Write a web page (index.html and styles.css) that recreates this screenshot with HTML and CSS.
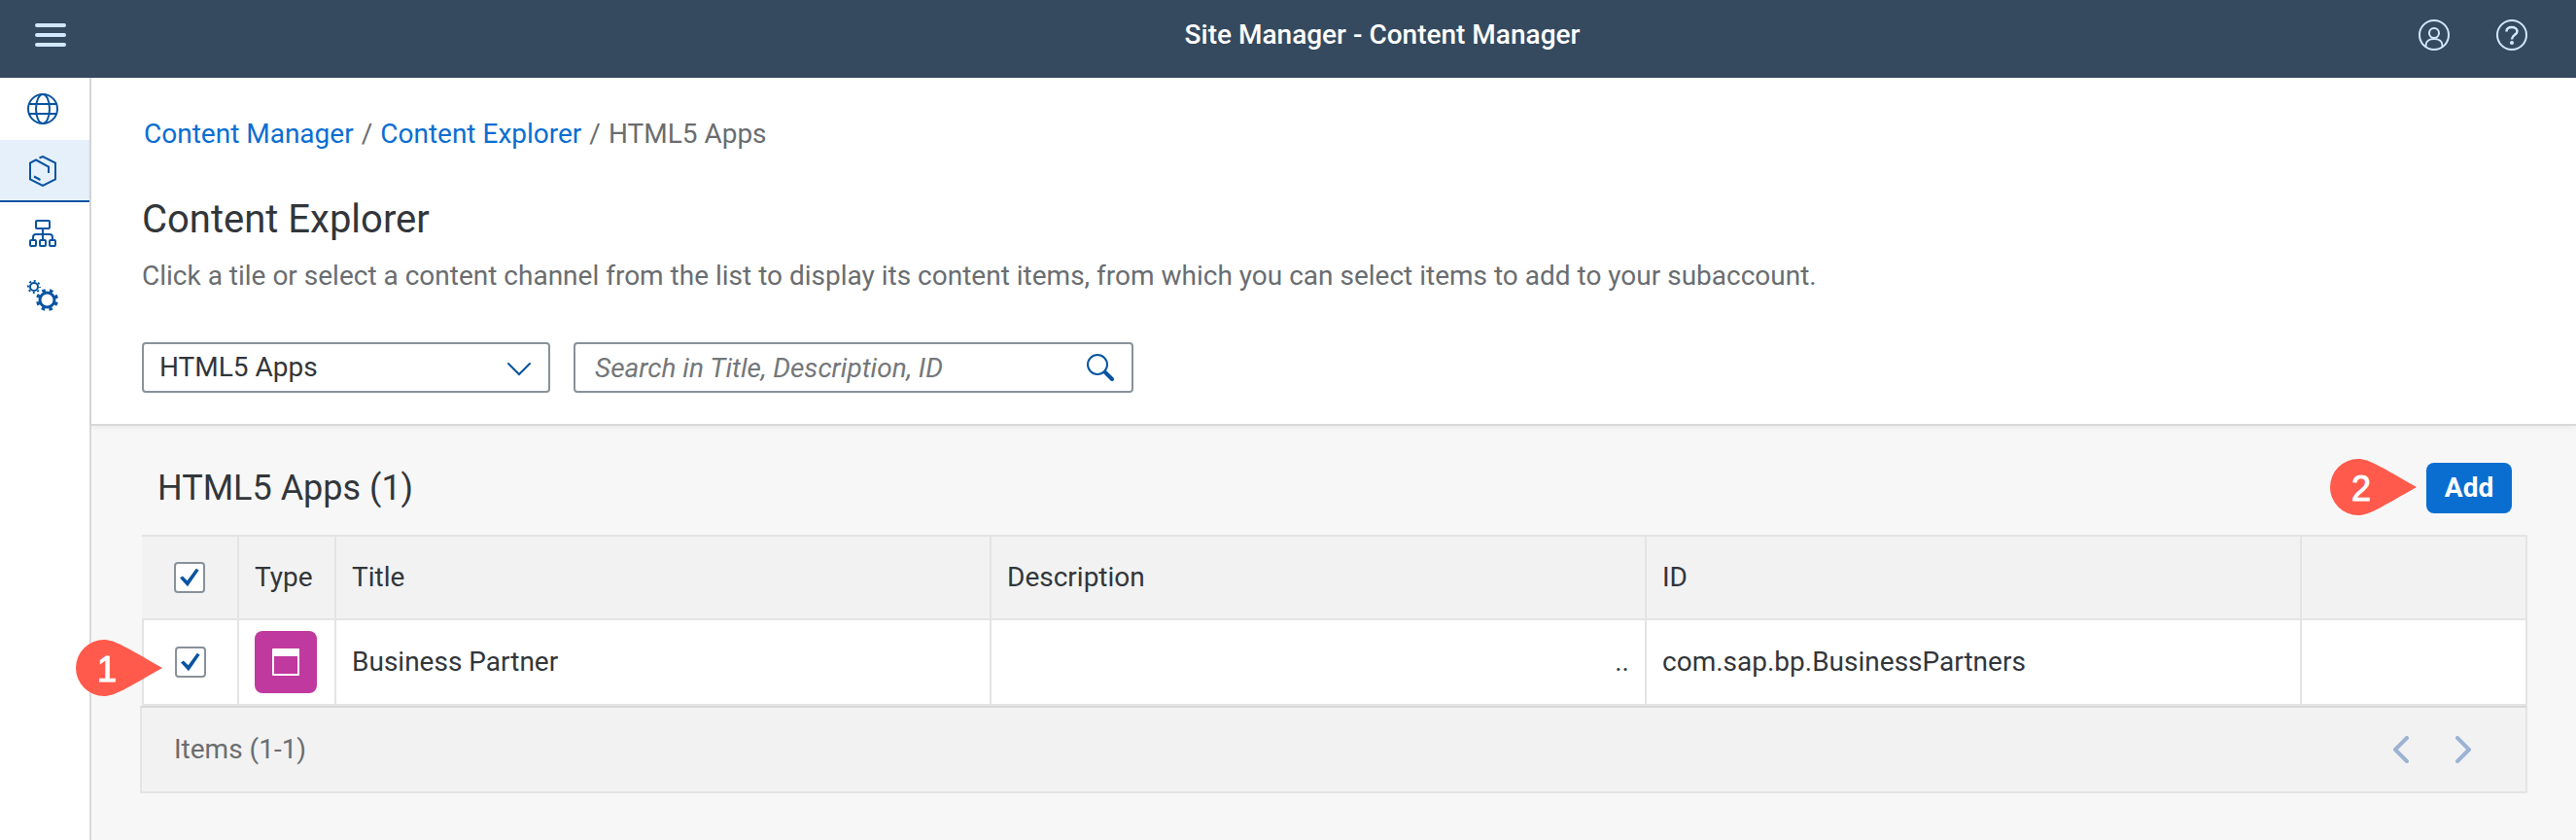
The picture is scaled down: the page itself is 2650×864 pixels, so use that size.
FILE: index.html
```html
<!DOCTYPE html>
<html lang="en">
<head>
<meta charset="utf-8">
<title>Site Manager - Content Manager</title>
<link rel="stylesheet" href="styles.css">
</head>
<body>
<header class="shell">
  <div class="shell-start">
    <button class="icon-button" type="button" aria-label="Menu">
      <svg width="32" height="32" viewBox="0 0 32 32" fill="none" stroke="currentColor" stroke-width="4" stroke-linecap="round"><path d="M2 6H30M2 16H30M2 26H30"/></svg>
    </button>
  </div>
  <div class="shell-title">Site Manager - Content Manager</div>
  <div class="shell-end">
    <button class="icon-button" type="button" aria-label="Account">
      <svg width="32" height="32" viewBox="0 0 32 32" fill="none" stroke="currentColor" stroke-width="2"><circle cx="16" cy="16" r="15"/><circle cx="16" cy="14" r="5"/><path d="M7.500 28V26.500C7.500 22.500 11 20 16 20S24.500 22.500 24.500 26.500V28"/></svg>
    </button>
    <button class="icon-button" type="button" aria-label="Help">
      <svg width="32" height="32" viewBox="0 0 32 32" fill="none" stroke="currentColor" stroke-width="2"><circle cx="16" cy="16" r="15"/><path stroke-width="2.500" d="M10.500 12.500C10.500 9.500 13 8 16 8S21.500 9.800 21.500 12.300C21.500 15.800 16 16 16 20.500"/><circle cx="16" cy="24" r="2" fill="currentColor" stroke="none"/></svg>
    </button>
  </div>
</header>
<div class="body">
  <nav class="sidebar" aria-label="Main">
    <a class="nav-item" href="#site" aria-label="Site Directory">
      <svg width="32" height="32" viewBox="0 0 32 32" fill="none" stroke="currentColor" stroke-width="2"><circle cx="16" cy="16" r="15"/><ellipse cx="16" cy="16" rx="7" ry="15"/><path d="M2 11H30M2 21H30"/></svg>
    </a>
    <a class="nav-item nav-item-selected" href="#content" aria-label="Content Manager" aria-current="page">
      <svg width="32" height="32" viewBox="0 0 32 32" fill="none" stroke="currentColor" stroke-width="2"><path d="M12.500 2.500L16 1L29 7.500V24.500L16 31L3 24.500V7.500L9 4.500L22 11.500V18M7 21.500L13.500 25"/></svg>
    </a>
    <a class="nav-item" href="#channels" aria-label="Channel Manager">
      <svg width="32" height="32" viewBox="0 0 32 32" fill="none" stroke="currentColor" stroke-width="2"><rect x="9" y="3" width="14" height="8" rx="1"/><rect x="3" y="23" width="6" height="6" rx="1"/><rect x="13" y="23" width="6" height="6" rx="1"/><rect x="23" y="23" width="6" height="6" rx="1"/><path d="M16 11V23M6 23V20Q6 17 9 17H23Q26 17 26 20V23"/></svg>
    </a>
    <a class="nav-item" href="#settings" aria-label="Settings">
      <svg width="32" height="32" viewBox="0 0 32 32" fill="none" stroke="currentColor"><circle cx="7" cy="7" r="4" stroke-width="2"/><circle cx="7" cy="7" r="6" stroke-width="2" stroke-dasharray="2 2.712" stroke-dashoffset="1"/><circle cx="20.500" cy="20.500" r="7.500" stroke-width="3"/><circle cx="20.500" cy="20.500" r="10" stroke-width="3" stroke-dasharray="3.600 4.254" stroke-dashoffset="-2.200"/></svg>
    </a>
  </nav>
  <main class="main">
    <section class="page-header">
      <nav class="breadcrumb" aria-label="Breadcrumb">
        <a href="#content">Content Manager</a><span>/</span><a href="#explorer">Content Explorer</a><span>/</span><span>HTML5 Apps</span>
      </nav>
      <h1 class="page-title">Content Explorer</h1>
      <p class="page-text">Click a tile or select a content channel from the list to display its content items, from which you can select items to add to your subaccount.</p>
      <div class="filters">
        <div class="field select-field">
          <select class="control" aria-label="Content channel"><option>HTML5 Apps</option></select>
          <svg class="field-icon select-icon" width="24" height="16" viewBox="0 0 24 16" fill="none" stroke="currentColor" stroke-width="2" stroke-linecap="round"><path d="M1 2L12 13L23 2"/></svg>
        </div>
        <div class="field search-field">
          <input class="control search-control" type="text" aria-label="Search" placeholder="Search in Title, Description, ID">
          <button class="field-icon search-icon" type="button" aria-label="Search">
            <svg width="28" height="28" viewBox="0 0 28 28" fill="none" stroke="currentColor" stroke-linecap="round"><circle cx="11" cy="11" r="10" stroke-width="2"/><path stroke-width="4" d="M19 19L26 26"/></svg>
          </button>
        </div>
      </div>
    </section>
    <section class="content">
      <div class="toolbar">
        <h2 class="table-title">HTML5 Apps (1)</h2>
        <div class="toolbar-action">
          <div class="callout callout-add">
            <svg width="90" height="58" viewBox="0 0 90 58"><path fill="currentColor" d="M29 0C40 0 52 8 89 29C52 50 40 58 29 58A29 29 0 0 1 29 0Z"/></svg>
            <span>2</span>
          </div>
          <button class="add-button" type="button">Add</button>
        </div>
      </div>
      <table class="items">
        <colgroup><col class="col-small"><col class="col-small"><col><col><col><col class="col-end"></colgroup>
        <thead>
          <tr>
            <th class="cell-check"><input class="check" type="checkbox" checked aria-label="Select all"></th>
            <th>Type</th><th>Title</th><th>Description</th><th>ID</th><th></th>
          </tr>
        </thead>
        <tbody>
          <tr>
            <td class="cell-check">
              <input class="check" type="checkbox" checked aria-label="Select Business Partner">
              <div class="callout callout-row">
                <svg width="90" height="58" viewBox="0 0 90 58"><path fill="currentColor" d="M29 0C40 0 52 8 89 29C52 50 40 58 29 58A29 29 0 0 1 29 0Z"/></svg>
                <span>1</span>
              </div>
            </td>
            <td>
              <div class="type-icon"><svg width="28" height="28" viewBox="0 0 28 28"><path fill="currentColor" fill-rule="evenodd" d="M1 0H27Q28 0 28 1V27Q28 28 27 28H1Q0 28 0 27V1Q0 0 1 0ZM2 8V26H26V8Z"/></svg></div>
            </td>
            <td>Business Partner</td><td class="cell-end">..</td><td>com.sap.bp.BusinessPartners</td><td></td>
          </tr>
        </tbody>
      </table>
      <footer class="pager">
        <span>Items (1-1)</span>
        <div class="pager-buttons">
          <button class="pager-button" type="button" disabled aria-label="Previous page"><svg width="16" height="28" viewBox="0 0 16 28" fill="none" stroke="currentColor" stroke-width="4" stroke-linecap="round" stroke-linejoin="round"><path d="M14 2L2 14L14 26"/></svg></button>
          <button class="pager-button" type="button" disabled aria-label="Next page"><svg width="16" height="28" viewBox="0 0 16 28" fill="none" stroke="currentColor" stroke-width="4" stroke-linecap="round" stroke-linejoin="round"><path d="M2 2L14 14L2 26"/></svg></button>
        </div>
      </footer>
    </section>
  </main>
</div>
</body>
</html>
```
FILE: styles.css
```css
* { box-sizing: border-box; }
body {
  margin: 0;
  min-height: 100vh;
  display: flex;
  flex-direction: column;
  font-family: Roboto, "Liberation Sans", sans-serif;
  font-size: 28px;
  line-height: 36px;
  color: #32363a;
  background: #f7f7f7;
}
button, input, select { font: inherit; color: inherit; margin: 0; padding: 0; }
svg { display: block; }

.shell {
  display: flex;
  align-items: center;
  height: 80px;
  padding: 0 50px 8px 36px;
  background: #354a5f;
  color: #d1e8ff;
}
.shell-start { display: flex; width: 352px; }
.shell-title { flex: 1; text-align: center; font-weight: 500; color: #fff; }
.shell-end { display: flex; gap: 48px; padding-left: 32px; }
.icon-button { border: 0; background: none; color: inherit; }

.body { flex: 1; display: flex; }
.sidebar { width: 94px; flex: none; background: #fff; border-right: 2px solid #d9d9d9; }
.nav-item {
  display: flex;
  align-items: center;
  height: 64px;
  padding-left: 28px;
  color: #0854a0;
}
.nav-item-selected { background: #e5f0fa; box-shadow: inset 0 -2px #0854a0; }

.main { flex: 1; min-width: 0; }
.page-header {
  padding: 40px 52px 32px;
  background: #fff;
  border-bottom: 2px solid #d9d9d9;
  box-shadow: 0 2px 6px rgba(0, 0, 0, 0.06);
}
.breadcrumb { display: flex; gap: 8px; padding-left: 2px; color: #6a6d70; }
.breadcrumb a { color: #0a6ed1; text-decoration: none; }
.page-title { margin: 44px 0 0; font-size: 40px; line-height: 52px; font-weight: 400; }
.page-text { margin: 14px 0 0; color: #6a6d70; }
.filters { display: flex; gap: 24px; margin-top: 50px; }
.field { position: relative; }
.select-field { width: 420px; }
.search-field { width: 576px; }
.control {
  display: block;
  width: 100%;
  height: 52px;
  padding: 0 16px;
  border: 2px solid #89919a;
  border-radius: 4px;
  background: #fff;
  appearance: none;
}
.search-control { padding: 0 64px 0 20px; }
.search-control::placeholder { color: #74777a; font-style: italic; opacity: 1; }
.field-icon { position: absolute; color: #0854a0; border: 0; background: none; }
.select-icon { right: 20px; top: 20px; pointer-events: none; }
.search-icon { right: 20px; top: 12px; }

.content { padding: 38px 50px 40px 50px; }
.toolbar { display: flex; justify-content: space-between; align-items: center; padding: 0 16px 22px 18px; }
.table-title { margin: 0; font-size: 36px; line-height: 44px; font-weight: 400; }
.toolbar-action { position: relative; }
.add-button {
  display: block;
  width: 88px;
  height: 52px;
  border: 0;
  border-radius: 8px;
  background: #0a6ed1;
  color: #fff;
  font-weight: 700;
}
.callout { position: absolute; width: 90px; color: #ff5a4c; }
.callout span {
  position: absolute;
  left: 0;
  top: 11px;
  width: 64px;
  text-align: center;
  color: #fff;
  font-family: "Liberation Sans", Arial, sans-serif;
  font-size: 36px;
  line-height: 40px;
  -webkit-text-stroke: 1px #fff;
}
.callout-add { right: 97px; top: -4px; }
.callout-row { left: -70px; top: 20px; }

.items {
  width: calc(100% - 2px);
  margin-left: 2px;
  table-layout: fixed;
  border-collapse: separate;
  border-spacing: 0;
  border-top: 2px solid #e4e4e4;
}
.col-small { width: 100px; }
.col-end { width: 232px; }
.items th, .items td {
  position: relative;
  padding: 0 16px;
  text-align: left;
  font-weight: 400;
  border-right: 2px solid #e4e4e4;
  border-bottom: 2px solid #e4e4e4;
}
.items th { height: 86px; background: #f2f2f2; }
.items td { height: 88px; background: #fff; }
.items td:first-child { border-left: 2px solid #e4e4e4; }
.items .cell-check { padding: 0 0 0 33px; }
.items td.cell-check { padding-left: 32px; }
.items .cell-end { text-align: right; }
.check {
  display: block;
  width: 32px;
  height: 32px;
  border: 2px solid #89919a;
  border-radius: 4px;
  background: #fff;
  appearance: none;
}
.check:checked::before {
  content: "";
  display: block;
  width: 20px;
  height: 20px;
  margin: 4px;
  background: #0854a0;
  clip-path: polygon(0 52%, 14% 42%, 38% 66%, 84% 4%, 98% 12%, 40% 96%);
}
.type-icon {
  display: grid;
  place-items: center;
  width: 64px;
  height: 64px;
  border-radius: 8px;
  background: #c0399f;
  color: #fff;
}
.pager {
  display: flex;
  align-items: center;
  justify-content: space-between;
  height: 90px;
  padding: 0 56px 0 33px;
  border: 2px solid #e4e4e4;
  border-top-color: #d9d9d9;
  background: #f2f2f2;
  color: #6a6d70;
}
.pager-buttons { display: flex; gap: 48px; }
.pager-button { border: 0; background: none; color: #9cb3d3; }
```
